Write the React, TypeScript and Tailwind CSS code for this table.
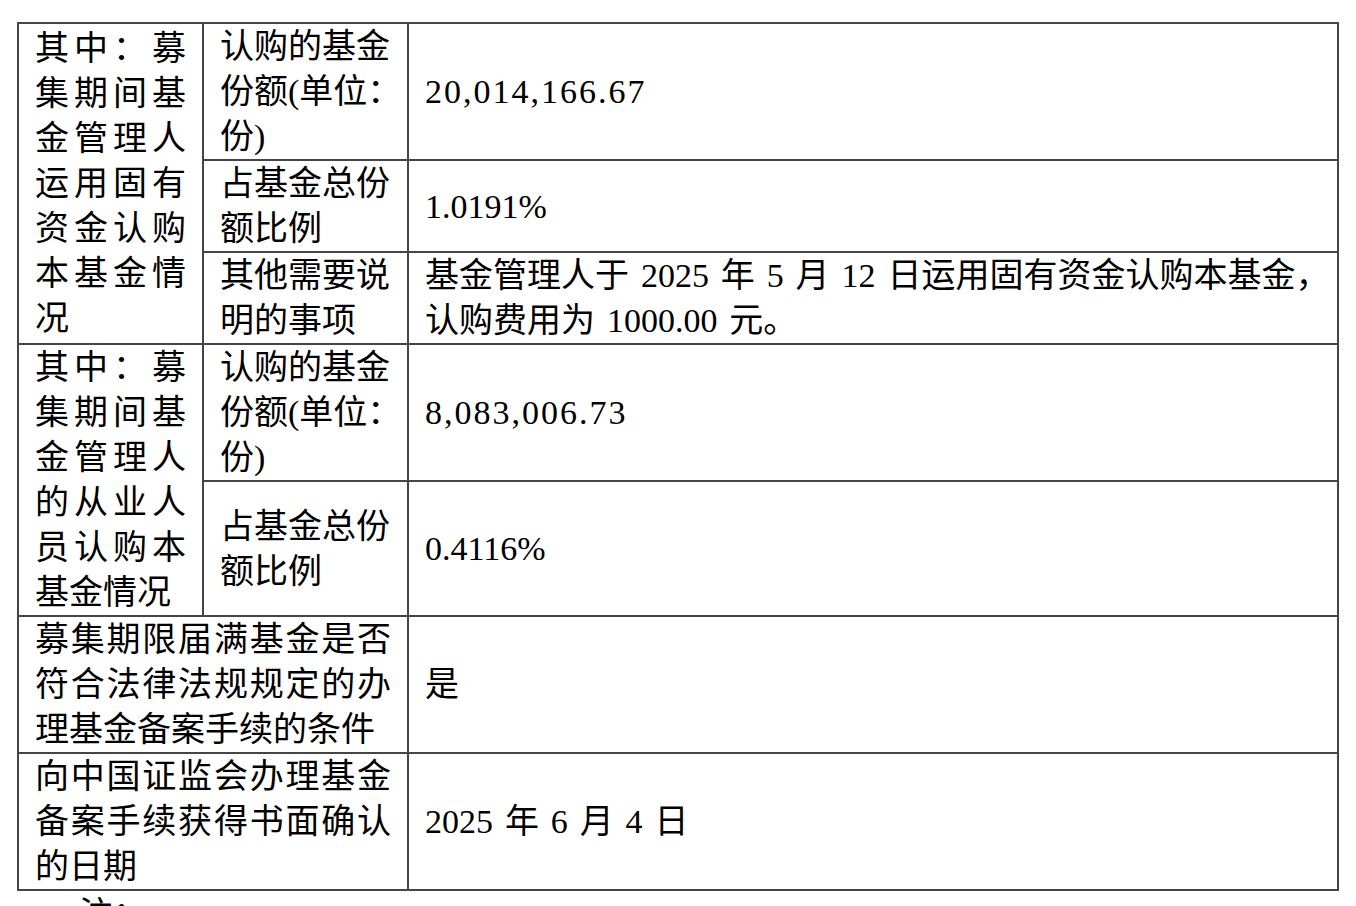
import React from "react";

const cell = "border-2 border-[#454545] px-[16px] py-0 align-middle";

// one line of a label, spread to the cell width like Word's distributed text
const J: React.FC<{ children: React.ReactNode }> = ({ children }) => (
  <div className="whitespace-nowrap [text-align-last:justify]">{children}</div>
);
const L: React.FC<{ children: React.ReactNode }> = ({ children }) => (
  <div className="whitespace-nowrap">{children}</div>
);

const App: React.FC = () => {
  return (
    <div
      className="min-h-screen bg-white text-black text-[34px] leading-[45px] [word-spacing:0.1em]"
      style={{ fontFamily: '"Liberation Serif", "Noto Sans CJK SC", serif' }}
    >
      <div className="pt-[22px] pl-[17px]">
        <table className="table-fixed border-collapse w-[1320px]">
          <colgroup>
            <col className="w-[185px]" />
            <col className="w-[205px]" />
            <col className="w-[930px]" />
          </colgroup>
          <tbody>
            <tr className="h-[137px]">
              <td rowSpan={3} className={cell}>
                <J>其中：募</J>
                <J>集期间基</J>
                <J>金管理人</J>
                <J>运用固有</J>
                <J>资金认购</J>
                <J>本基金情</J>
                <L>况</L>
              </td>
              <td className={cell}>
                <L>认购的基金</L>
                <L>份额(单位：</L>
                <L>份)</L>
              </td>
              <td className={`${cell} tracking-[2px]`}>20,014,166.67</td>
            </tr>
            <tr className="h-[91px]">
              <td className={cell}>
                <L>占基金总份</L>
                <L>额比例</L>
              </td>
              <td className={cell}>1.0191%</td>
            </tr>
            <tr className="h-[92px]">
              <td className={cell}>
                <L>其他需要说</L>
                <L>明的事项</L>
              </td>
              <td className={cell}>
                <L>基金管理人于 2025 年 5 月 12 日运用固有资金认购本基金，</L>
                <L>认购费用为 1000.00 元。</L>
              </td>
            </tr>
            <tr className="h-[137px]">
              <td rowSpan={2} className={cell}>
                <J>其中：募</J>
                <J>集期间基</J>
                <J>金管理人</J>
                <J>的从业人</J>
                <J>员认购本</J>
                <L>基金情况</L>
              </td>
              <td className={cell}>
                <L>认购的基金</L>
                <L>份额(单位：</L>
                <L>份)</L>
              </td>
              <td className={`${cell} tracking-[2px]`}>8,083,006.73</td>
            </tr>
            <tr className="h-[135px]">
              <td className={cell}>
                <L>占基金总份</L>
                <L>额比例</L>
              </td>
              <td className={cell}>0.4116%</td>
            </tr>
            <tr className="h-[137px]">
              <td colSpan={2} className={cell}>
                <J>募集期限届满基金是否</J>
                <J>符合法律法规规定的办</J>
                <L>理基金备案手续的条件</L>
              </td>
              <td className={cell}>是</td>
            </tr>
            <tr className="h-[136px]">
              <td colSpan={2} className={cell}>
                <J>向中国证监会办理基金</J>
                <J>备案手续获得书面确认</J>
                <L>的日期</L>
              </td>
              <td className={cell}>2025 年 6 月 4 日</td>
            </tr>
          </tbody>
        </table>
        <p className="pl-[62px] pt-px">注：</p>
      </div>
    </div>
  );
};

export default App;
